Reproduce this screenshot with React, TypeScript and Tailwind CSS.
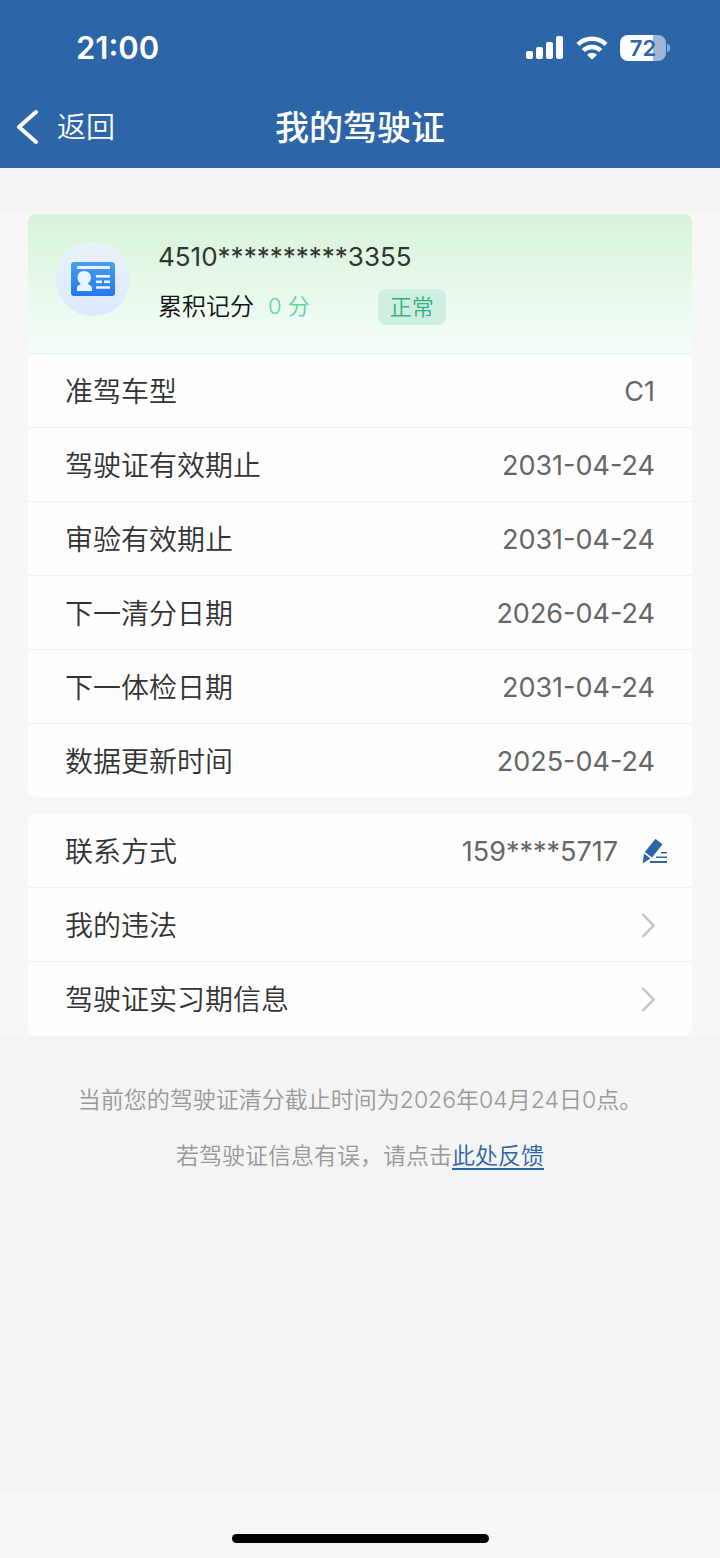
import React from 'react';

interface InfoItem {
  label: string;
  value: string;
}

const licenseInfo: InfoItem[] = [
  { label: '准驾车型', value: 'C1' },
  { label: '驾驶证有效期止', value: '2031-04-24' },
  { label: '审验有效期止', value: '2031-04-24' },
  { label: '下一清分日期', value: '2026-04-24' },
  { label: '下一体检日期', value: '2031-04-24' },
  { label: '数据更新时间', value: '2025-04-24' },
];

const links = ['我的违法', '驾驶证实习期信息'];

const StatusBar: React.FC = () => (
  <div className="flex h-24 items-center justify-between pr-[50px] pl-19">
    <span className="text-[31px] leading-10 font-semibold">21:00</span>
    <div className="flex items-center gap-3">
      {/* Signal */}
      <svg width="38" height="24" viewBox="0 0 38 24" fill="currentColor" aria-hidden="true">
        <rect x="0" y="15" width="7" height="8" rx="2" />
        <rect x="10" y="11" width="7" height="12" rx="2" />
        <rect x="20" y="6" width="7" height="17" rx="2" />
        <rect x="30" y="0" width="7" height="23" rx="2" />
      </svg>
      {/* Wifi */}
      <svg width="32" height="24" viewBox="0 0 32 24" fill="none" stroke="currentColor" strokeWidth="4.500" aria-hidden="true">
        <path d="M2 8.500a20 20 0 0 1 28 0" />
        <path d="M7.200 14.500a12.500 12.500 0 0 1 17.600 0" />
        <path d="M16 23.800l-5-5a7.200 7.200 0 0 1 10 0z" fill="currentColor" stroke="none" />
      </svg>
      {/* Battery */}
      <div className="flex items-center gap-px">
        <div className="flex h-[26px] w-[46px] items-center justify-center rounded-lg bg-linear-to-r from-white from-72% to-[#a0b5d7] to-72% text-[22px] leading-6 font-semibold text-[#2c66a9]">
          72
        </div>
        <div className="h-2 w-[3px] rounded-r-full bg-[#7fa9dc]" />
      </div>
    </div>
  </div>
);

const IdCardIcon: React.FC = () => (
  <svg width="44" height="34" viewBox="0 0 44 34" aria-hidden="true">
    <defs>
      <linearGradient id="idCard" x1="0" y1="0" x2="0" y2="1">
        <stop offset="0" stopColor="#4a9ff0" />
        <stop offset="1" stopColor="#2378ee" />
      </linearGradient>
    </defs>
    <rect width="44" height="34" rx="3" fill="url(#idCard)" />
    <g fill="#eaf3ff">
      <rect x="6" y="4" width="33" height="3" />
      <path d="M13 9c4 0 7 2.800 7 6.500 0 2.600-1.200 4.600-3 5.800 0 2.200 4 1.700 4 4.700v3H6v-3c0-3 3.500-2.500 3.500-4.700C7.500 20.100 6.500 18.100 6.500 15.500 6.500 11.800 9 9 13 9z" />
      <rect x="25" y="13" width="14" height="2.600" />
      <rect x="25" y="18.500" width="6" height="2.600" />
      <rect x="33" y="18.500" width="6" height="2.600" />
      <rect x="25" y="24.200" width="14" height="2.600" />
    </g>
  </svg>
);

const EditIcon: React.FC = () => (
  <svg width="26" height="26" viewBox="0 0 26 26" fill="#2c66a9" aria-hidden="true">
    <path d="M14.300.400l5.600 4.400a1 1 0 0 1 .1 1.300L10 18.600 2.800 13 12.900.500a1 1 0 0 1 1.400-.1z" />
    <path d="M2 14.400l6.400 5L.7 24.400z" />
    <rect x="19" y="13" width="6" height="1.500" />
    <rect x="14" y="17.500" width="11" height="1.500" />
    <rect x="8" y="22" width="17" height="2" />
  </svg>
);

const ChevronIcon: React.FC = () => (
  <svg width="14" height="26" viewBox="0 0 14 26" fill="none" stroke="#c4c4c4" strokeWidth="2.500" aria-hidden="true">
    <path d="M1.500 1L12.500 12.500 1.500 24" />
  </svg>
);

const App: React.FC = () => {
  return (
    <div className="flex min-h-screen flex-col bg-[#f4f4f4] font-['Inter','Noto_Sans_CJK_SC',sans-serif] font-[350] text-[#333333]">
      <header className="bg-[#2c66a9] text-white">
        <StatusBar />
        <div className="grid h-18 grid-cols-3 items-center pb-2 pl-4">
          <button type="button" className="flex items-center gap-[18px] text-[29px] leading-10 font-[350]">
            <svg width="23" height="36" viewBox="0 0 23 36" fill="none" stroke="currentColor" strokeWidth="4" strokeLinecap="round" strokeLinejoin="round" aria-hidden="true">
              <path d="M20 2L3 17l17 15" />
            </svg>
            返回
          </button>
          <h1 className="pr-4 text-center text-[34px] leading-10 font-medium whitespace-nowrap">我的驾驶证</h1>
        </div>
      </header>

      <main className="flex-1">
        <div className="mt-11 bg-[#f7f7f7] px-7 pt-0.5">
          <section className="overflow-hidden rounded-lg bg-[#fefefe]">
            {/* License summary */}
            <div className="flex h-[140px] items-start gap-7 border-b border-[#e4f3ec] bg-linear-to-b from-[#d5f4d9] via-[#e7f8e9] to-[#f5fef9] px-7 pt-6">
              <div className="mt-1 flex size-[74px] items-center justify-center rounded-full bg-linear-to-b from-[#eaf2f8] to-[#dce9fc]">
                <IdCardIcon />
              </div>
              <div className="pt-px">
                <p className="text-[26px] leading-9 font-normal">4510**********3355</p>
                <div className="mt-[14px] flex h-9 items-center text-2xl text-[#111111]">
                  <span>累积记分</span>
                  <span className="ml-[14px] text-[22px] text-[#5bd3a6]">0 分</span>
                  <span className="ml-[68px] rounded-lg bg-[#cdeee0] px-3 text-[22px] leading-9 text-[#2fb380]">正常</span>
                </div>
              </div>
            </div>

            {/* License details */}
            <dl className="divide-y divide-[#f1f1f1]">
              {licenseInfo.map((item) => (
                <div key={item.label} className="flex h-[74px] items-center justify-between px-[37px] pt-0.5 text-[28px] leading-10 last:h-[73px]">
                  <dt>{item.label}</dt>
                  <dd className="text-[27px] font-normal text-[#666666]">{item.value}</dd>
                </div>
              ))}
            </dl>
          </section>

          <section className="mt-[17px] divide-y divide-[#f1f1f1] rounded-lg bg-[#fefefe] text-[28px] leading-10">
            <div className="flex h-[74px] items-center pt-0.5 pr-6 pl-[37px]">
              <span className="flex-1">联系方式</span>
              <span className="mr-6 text-[27px] font-normal text-[#666666]">159****5717</span>
              <button type="button" aria-label="修改联系方式">
                <EditIcon />
              </button>
            </div>
            {links.map((label) => (
              <a key={label} href="#" className="flex h-[74px] items-center justify-between px-[37px] pt-0.5">
                {label}
                <ChevronIcon />
              </a>
            ))}
          </section>
        </div>

        <div className="mt-11 space-y-4 text-center text-[23px] leading-10 text-[#999999]">
          <p>当前您的驾驶证清分截止时间为2026年04月24日0点。</p>
          <p>
            若驾驶证信息有误，请点击
            <a href="#" className="text-[#2c66a9] underline decoration-2 underline-offset-4">此处反馈</a>
          </p>
        </div>
      </main>

      {/* Home indicator */}
      <div className="flex h-16 items-end justify-center bg-[#f7f7f7] pb-[15px]">
        <div className="h-[9px] w-[257px] rounded-full bg-black" />
      </div>
    </div>
  );
};

export default App;
